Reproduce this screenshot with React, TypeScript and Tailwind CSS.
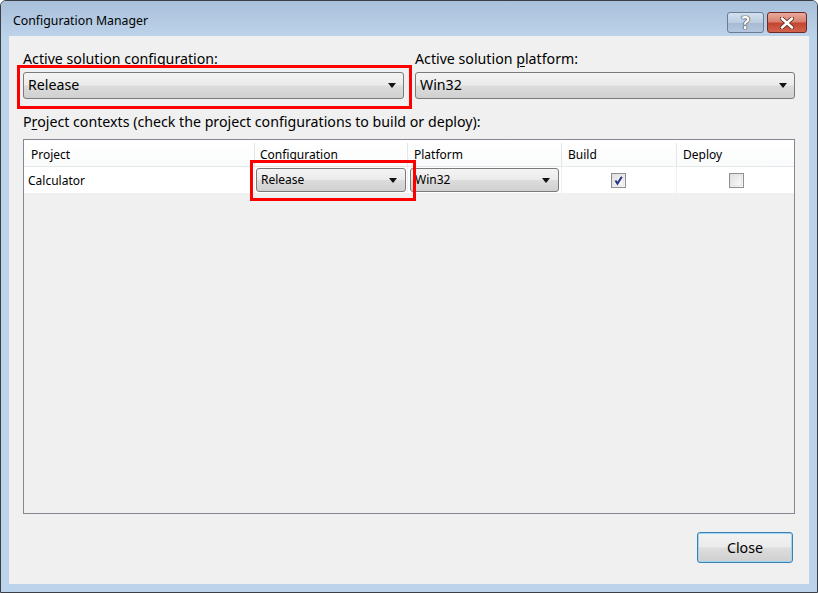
const FONT = { fontFamily: '"Noto Sans", "Open Sans", Arial, sans-serif' };

function Arrow() {
  return (
    <svg width="8" height="5" viewBox="0 0 8 5" className="shrink-0">
      <path d="M0 0h8L4 5z" fill="#111" />
    </svg>
  );
}

function Combo({ value, big }: { value: string; big?: boolean }) {
  return (
    <div
      className={
        "flex w-full items-center justify-between rounded-[3px] border border-[#7a7a7a] bg-[linear-gradient(#f4f4f4_0%,#ebebeb_48%,#dcdcdc_52%,#d0d0d0_100%)] " +
        (big ? "h-[27px] pl-[4px] pr-[7px] text-[14.2px]" : "h-[24px] pl-[4px] pr-[8px] text-[12px]")
      }
    >
      <span className="leading-none text-black">{value}</span>
      <Arrow />
    </div>
  );
}

function CheckBox({ checked }: { checked?: boolean }) {
  return (
    <div className="flex h-[15px] w-[15px] items-center justify-center border border-[#8e8f8f] bg-[linear-gradient(135deg,#dcdcdc,#fbfbfb)] p-[1px]">
      <div className="flex h-full w-full items-center justify-center border border-[#e6e6e6] bg-[linear-gradient(135deg,#e4e4e4,#f8f8f8)]">
        {checked && (
          <svg width="11" height="11" viewBox="0 0 11 11">
            <path d="M1.8 5.5l2.4 3.8L9.6 0.8" fill="none" stroke="#26348a" strokeWidth="2.4" />
          </svg>
        )}
      </div>
    </div>
  );
}

export default function App() {
  return (
    <div className="h-[593px] w-[818px] overflow-hidden" style={FONT}>
      <div className="flex h-full w-full flex-col rounded-t-[6px] border border-[#3b3f45] bg-[#bcd3ec]">
        {/* title bar */}
        <div className="relative flex h-[35px] shrink-0 items-center rounded-t-[5px] bg-[linear-gradient(#a9c0da,#bcd2ea)] pl-[12px]">
          <span className="pt-[6px] text-[12.3px] text-black">Configuration Manager</span>
          <div className="absolute right-[10px] top-[11px] flex gap-[3px]">
            <div className="flex h-[21px] w-[37px] items-center justify-center rounded-[3px] border border-[#6a7c93] bg-[linear-gradient(#d3e0ef_0%,#bccde2_50%,#a6bad3_51%,#b4c7de_100%)]">
              <span
                className="text-[17px] font-bold leading-none text-white"
                style={{ textShadow: "0 0 1px #333, 0 0 1px #333, 0 0 1px #333" }}
              >
                ?
              </span>
            </div>
            <div className="flex h-[21px] w-[40px] items-center justify-center rounded-[3px] border border-[#6e2a20] bg-[linear-gradient(#e9a99c_0%,#d7806e_48%,#c4442f_52%,#d1644e_100%)]">
              <svg width="14" height="12" viewBox="0 0 14 12">
                <path d="M2 1.5l10 9M12 1.5l-10 9" stroke="#5a2418" strokeWidth="4.2" strokeLinecap="round" />
                <path d="M2 1.5l10 9M12 1.5l-10 9" stroke="#fff" strokeWidth="2.6" strokeLinecap="round" />
              </svg>
            </div>
          </div>
        </div>

        {/* client area */}
        <div className="mx-[8px] mb-[8px] flex flex-1 flex-col bg-[#f0f0f0] px-[14px] text-black">
          <div className="mt-[13px] flex gap-[11px]">
            <div className="relative w-[381px]">
              <div className="mb-[3px] text-[14.2px] leading-[20px]">
                Active solution <span className="underline underline-offset-2">c</span>onfiguration:
              </div>
              <Combo value="Release" big />
              <div className="pointer-events-none absolute left-[-6px] top-[16px] h-[44px] w-[395px] border-[3px] border-[#ff0000]" />
            </div>
            <div className="w-[380px]">
              <div className="mb-[3px] text-[14.2px] leading-[20px]">
                Active solution <span className="underline underline-offset-2">p</span>latform:
              </div>
              <Combo value="Win32" big />
            </div>
          </div>

          <div className="mt-[13px] text-[14.2px] leading-[20px]">
            P<span className="underline underline-offset-2">r</span>oject contexts (check the project configurations to build or deploy):
          </div>

          {/* grid */}
          <div className="relative mt-[7px] h-[375px] w-[772px] border border-[#828790]">
            <div className="flex h-[26px] bg-[linear-gradient(#ffffff,#fafbfc)] pt-[3px] text-[12px]">
              <div className="flex w-[231px] items-center border-r border-[#e3e5e8] pl-[7px]">Project</div>
              <div className="flex w-[153px] items-center border-r border-[#e3e5e8] pl-[5px]">Configuration</div>
              <div className="flex w-[154px] items-center border-r border-[#e3e5e8] pl-[6px]">Platform</div>
              <div className="flex w-[115px] items-center border-r border-[#e3e5e8] pl-[6px]">Build</div>
              <div className="flex flex-1 items-center pl-[6px]">Deploy</div>
            </div>
            <div className="flex h-[27px] border-t border-[#e8e8e8] bg-white text-[12px]">
              <div className="flex w-[231px] items-center border-r border-[#f0f0f0] pl-[4px] pt-[1px]">Calculator</div>
              <div className="flex w-[153px] items-center border-r border-[#f0f0f0] pl-[1px] pr-[1px]">
                <Combo value="Release" />
              </div>
              <div className="flex w-[154px] items-center border-r border-[#f0f0f0] pl-[2px] pr-[2px]">
                <Combo value="Win32" />
              </div>
              <div className="flex w-[115px] items-center justify-center border-r border-[#f0f0f0] pr-[2px]">
                <CheckBox checked />
              </div>
              <div className="flex flex-1 items-center justify-center pl-[1px]">
                <CheckBox />
              </div>
            </div>
            <div className="pointer-events-none absolute left-[226px] top-[20px] h-[41px] w-[166px] border-[3px] border-[#ff0000]" />
          </div>

          <div className="mt-[18px] flex justify-end pr-[2px]">
            <div className="flex h-[31px] w-[96px] items-center justify-center rounded-[3px] border border-[#3c7fb1] bg-[linear-gradient(#f2f2f2_0%,#ebebeb_48%,#dddddd_52%,#cfcfcf_100%)] shadow-[inset_0_0_0_1px_#9fd6f3] text-[14.2px]">
              Close
            </div>
          </div>
        </div>
      </div>
    </div>
  );
}
